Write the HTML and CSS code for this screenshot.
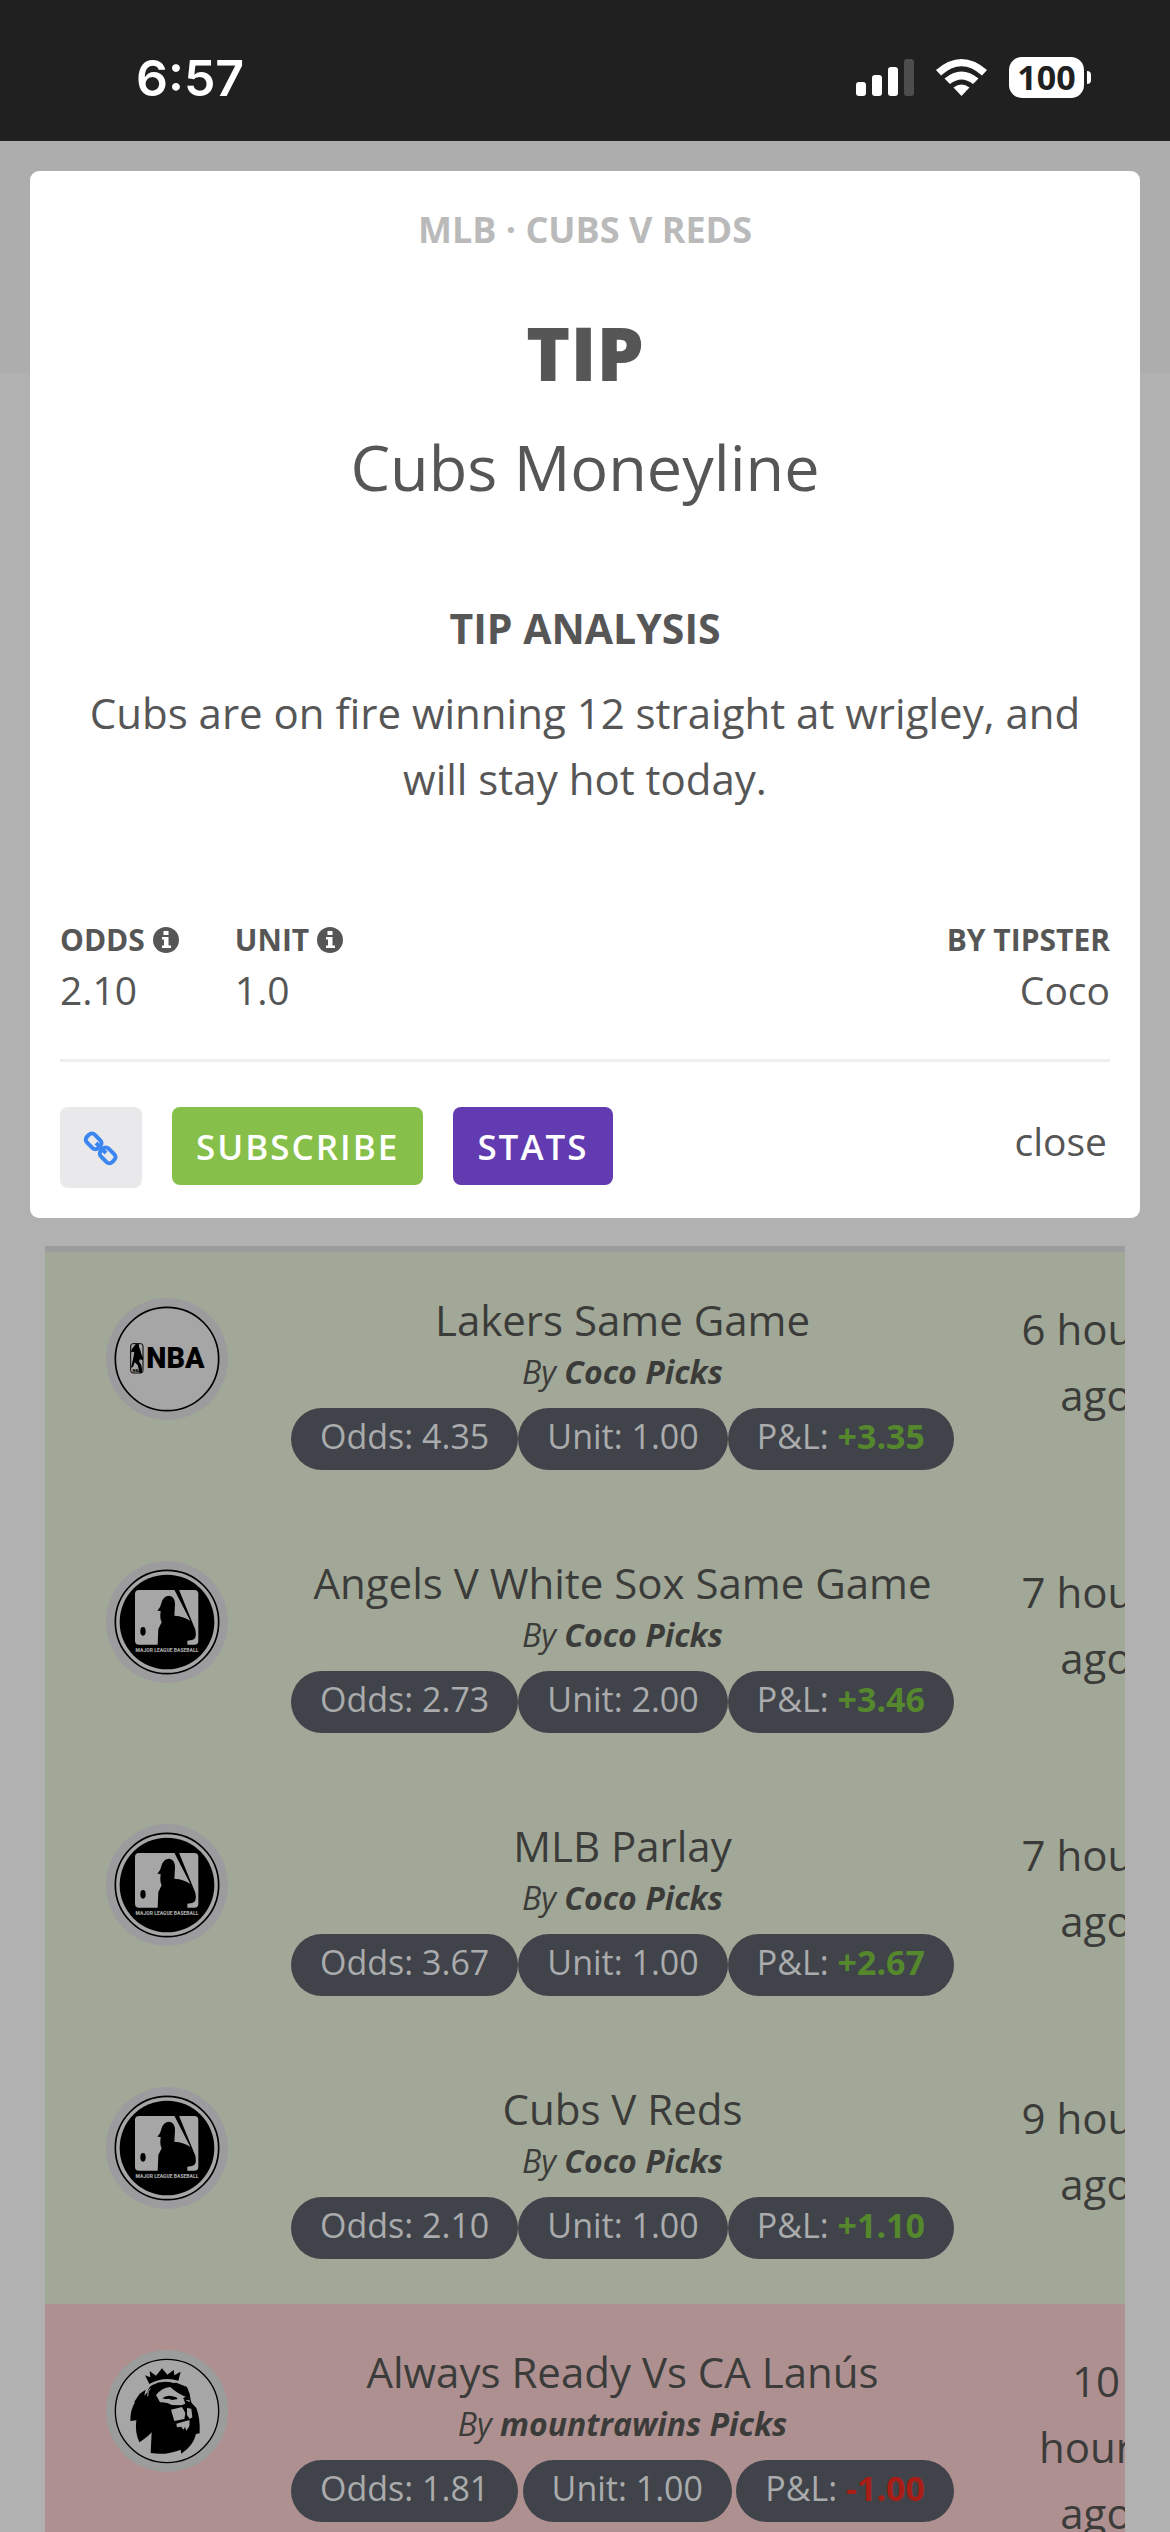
FILE: index.html
```html
<!DOCTYPE html>
<html lang="en">

<head>
    <meta charset="UTF-8">
    <meta name="viewport" content="width=device-width, initial-scale=1.0">
    <title>Tip</title>
    <link rel="stylesheet" href="styles.css">
</head>

<body>
    <!-- shared drawings -->
    <svg class="defs" width="0" height="0" aria-hidden="true">
        <symbol id="info" viewBox="0 0 26 26">
            <circle cx="13" cy="13" r="13" fill="#565656" />
            <path d="M10.500 4h5v4h-5zM9 10h6.500v8.500H18V21H9v-2.500h2v-6H9z" fill="#fff" />
        </symbol>
        <symbol id="mlb" viewBox="47 61 366 366">
            <circle cx="230" cy="244" r="183" fill="#9c9c9e" />
            <circle cx="230" cy="244" r="155" fill="#a6a6a6" stroke="#000" stroke-width="5" />
            <circle cx="230" cy="244" r="142" />
            <rect x="134" y="148" width="190" height="164" rx="12" fill="#a6a6a6" />
            <path d="M252 147h14l49 120q6 28-10 31l-14 2v13h-89l2-48 10-20q-6-10-3-34l-10-1q10-9 13-25 6-20 22-20 18 2 18 26l-2 34q30 2 48 16z" />
            <ellipse cx="158" cy="272" rx="8" ry="13" />
            <text class="logo-text" x="230" y="334" font-size="15" text-anchor="middle" fill="#a6a6a6">MAJOR LEAGUE BASEBALL</text>
        </symbol>
    </svg>

    <div class="status">
        <span class="time">6:57</span>
        <div class="status-icons">
            <svg width="58" height="37" viewBox="0 0 58 37" fill="#fff">
                <rect y="23" width="10" height="14" rx="3" />
                <rect x="16" y="16" width="10" height="21" rx="3" />
                <rect x="32" y="8" width="10" height="29" rx="3" />
                <rect x="48" width="10" height="37" rx="3" fill="#4d4d4d" />
            </svg>
            <svg width="51" height="37" viewBox="0 0 51 37" fill="#fff">
                <path d="M0 11Q25.500-11 51 11l-5 5.500Q25.500-2 5 16.500z" />
                <path d="M8.500 19.500q17-14 34 0l-5.500 5.500q-11.500-9-23 0z" />
                <path d="M17.500 28.500q8-6 16 0l-8 8.500z" />
            </svg>
            <div class="battery">100</div>
        </div>
    </div>

    <div class="page">
        <div class="modal" role="dialog" aria-labelledby="tip-title">
            <div class="modal-head">MLB · CUBS V REDS</div>
            <h1 id="tip-title">TIP</h1>
            <div class="pick">Cubs Moneyline</div>
            <h2>TIP ANALYSIS</h2>
            <p class="analysis">Cubs are on fire winning 12 straight at wrigley, and will stay hot today.</p>
            <div class="info">
                <div class="info-item">
                    <div class="label">ODDS <svg class="info-icon"><use href="#info" /></svg></div>
                    <div class="value">2.10</div>
                </div>
                <div class="info-item">
                    <div class="label">UNIT <svg class="info-icon"><use href="#info" /></svg></div>
                    <div class="value">1.0</div>
                </div>
                <div class="info-item tipster">
                    <div class="label">BY TIPSTER</div>
                    <div class="value">Coco</div>
                </div>
            </div>
            <div class="actions">
                <button class="btn link" aria-label="Copy link">
                    <svg width="36" height="36" viewBox="0 0 36 36" fill="none" stroke="#3b86f0" stroke-width="4">
                        <rect x="3" y="6" width="16" height="11" rx="4" transform="rotate(45 11 11)" />
                        <rect x="17" y="20" width="16" height="11" rx="4" transform="rotate(45 25 25)" />
                        <path d="M13 13l10 10" />
                    </svg>
                </button>
                <button class="btn subscribe">SUBSCRIBE</button>
                <button class="btn stats">STATS</button>
                <button class="close">close</button>
            </div>
        </div>

        <div class="list">
            <table class="tips">
                <tr class="win">
                    <td class="logo">
                        <svg viewBox="47 53 366 366">
                            <circle cx="230" cy="236" r="183" fill="#9c9c9e" />
                            <circle cx="230" cy="236" r="155" fill="#a6a6a6" stroke="#000" stroke-width="5" />
                            <rect x="121" y="190" width="37" height="88" rx="7" fill="none" stroke="#000" stroke-width="3" />
                            <path d="M137 190h8l2 12q4 6 5 16l3 8 4 6-2 8-8-3-3 6q8 10 9 22v13h-7l-6-24-9-8-5 14-6 2 8-34 2-14-10 2q0-10 9-18z" />
                            <text class="logo-text" x="139" y="274" font-size="12" text-anchor="middle">NBA</text>
                            <text class="logo-text" x="168" y="264" font-size="86">NBA</text>
                        </svg>
                    </td>
                    <td class="tip">
                        <div class="tip-name">Lakers Same Game</div>
                        <div class="by">By <b>Coco Picks</b></div>
                        <div class="pills">
                            <span class="pill">Odds: 4.35</span>
                            <span class="pill">Unit: 1.00</span>
                            <span class="pill">P&amp;L: <b>+3.35</b></span>
                        </div>
                    </td>
                    <td class="ago">6 hours ago</td>
                </tr>
                <tr class="win">
                    <td class="logo"><svg><use href="#mlb" /></svg></td>
                    <td class="tip">
                        <div class="tip-name">Angels V White Sox Same Game</div>
                        <div class="by">By <b>Coco Picks</b></div>
                        <div class="pills">
                            <span class="pill">Odds: 2.73</span>
                            <span class="pill">Unit: 2.00</span>
                            <span class="pill">P&amp;L: <b>+3.46</b></span>
                        </div>
                    </td>
                    <td class="ago">7 hours ago</td>
                </tr>
                <tr class="win">
                    <td class="logo"><svg><use href="#mlb" /></svg></td>
                    <td class="tip">
                        <div class="tip-name">MLB Parlay</div>
                        <div class="by">By <b>Coco Picks</b></div>
                        <div class="pills">
                            <span class="pill">Odds: 3.67</span>
                            <span class="pill">Unit: 1.00</span>
                            <span class="pill">P&amp;L: <b>+2.67</b></span>
                        </div>
                    </td>
                    <td class="ago">7 hours ago</td>
                </tr>
                <tr class="win">
                    <td class="logo"><svg><use href="#mlb" /></svg></td>
                    <td class="tip">
                        <div class="tip-name">Cubs V Reds</div>
                        <div class="by">By <b>Coco Picks</b></div>
                        <div class="pills">
                            <span class="pill">Odds: 2.10</span>
                            <span class="pill">Unit: 1.00</span>
                            <span class="pill">P&amp;L: <b>+1.10</b></span>
                        </div>
                    </td>
                    <td class="ago">9 hours ago</td>
                </tr>
                <tr class="loss">
                    <td class="logo">
                        <svg viewBox="47 61 366 366">
                            <circle cx="230" cy="244" r="183" fill="#9b9c9c" />
                            <circle cx="230" cy="244" r="155" fill="#a6a6a6" stroke="#000" stroke-width="4" />
                            <!-- crown -->
                            <path d="M177 163l-13-26 16 6-2-19 19 14 18-22 16 19 19-14 2 16 19-11-7 27q-44-13-87 10z" />
                            <!-- head and mane -->
                            <path d="M186 166q30-16 64-6l8-1 32 13 8 20 3 20 3 8 14 15q12 30 10 76l-11 2q-8 35-44 59l-2-12q-44 18-90 10l3-62q-12 14-37 30-14-30-9-66l-18 2q0-34 14-56h-3l17-26 18-12-4 18 10-10q0-14 14-22z" />
                            <g fill="#a6a6a6">
                                <path d="M197 196q18-22 43-24 22 22 58 34v12l-18-10 5 14-12 5-28-1q-16-10-36-8z" />
                                <path d="M242 240l33-8 10 18-3 18-30 6zM290 235l13 2 3 26-8 5-8-12zM258 282l31-9 9-1-1 18-9 13-4-12-4 9-8-9-12 2z" />
                                <path d="M171 205q1-24 14-30l24 2q-14 4-17 18l-8 12q-4-7-13-2z" fill="#000" />
                                <path d="M172 200q0-18 8-24" fill="none" stroke="#a6a6a6" stroke-width="3" />
                            </g>
                            <path d="M216 206q14-14 42-3l4 5-16 3-12-4q-8 3-18-1zM278 206l12-7 10 8-2 5-14-1z" />
                        </svg>
                    </td>
                    <td class="tip">
                        <div class="tip-name">Always Ready Vs CA Lanús</div>
                        <div class="by">By <b>mountrawins Picks</b></div>
                        <div class="pills">
                            <span class="pill">Odds: 1.81</span>
                            <span class="pill">Unit: 1.00</span>
                            <span class="pill">P&amp;L: <b>-1.00</b></span>
                        </div>
                    </td>
                    <td class="ago">10 hours ago</td>
                </tr>
            </table>
        </div>
    </div>
</body>

</html>
```
FILE: styles.css
```css
* {
    margin: 0;
    padding: 0;
    box-sizing: border-box;
}

body {
    height: 100vh;
    overflow: hidden;
    background: #b1b1b1;
    color: #565656;
    font-family: "Open Sans", sans-serif;
    font-size: 42px;
    line-height: 66px;
}

.defs {
    position: absolute;
}

/* status bar */
.status {
    display: flex;
    justify-content: space-between;
    align-items: center;
    height: 141px;
    padding: 14px 86px 0 136px;
    background: #202020;
    color: #fff;
    font-family: Inter, sans-serif;
}

.time {
    font-size: 50px;
    font-weight: 600;
}

.status-icons {
    display: flex;
    align-items: center;
    gap: 22px;
}

.battery {
    position: relative;
    width: 75px;
    height: 41px;
    border-radius: 13px;
    background: #fff;
    color: #202020;
    font-family: "Open Sans", sans-serif;
    font-size: 34px;
    font-weight: 700;
    line-height: 41px;
    text-align: center;
}

.battery::after {
    content: "";
    position: absolute;
    top: 14px;
    right: -7px;
    width: 4px;
    height: 13px;
    border-radius: 0 4px 4px 0;
    background: #fff;
}

.page {
    padding: 30px 30px 0;
    background: linear-gradient(#adadad 232px, #b1b1b1 232px);
}

/* modal */
.modal {
    padding: 34px 30px 30px;
    border-radius: 9px;
    background: #fff;
    text-align: center;
}

.modal-head {
    color: #bababa;
    font-size: 36px;
    font-weight: 700;
    line-height: 50px;
}

h1 {
    margin-top: 46px;
    font-size: 75px;
    font-weight: 800;
    line-height: 102px;
}

.pick {
    margin-top: 21px;
    font-size: 63px;
    line-height: 86px;
}

h2 {
    margin-top: 90px;
    font-size: 41px;
    font-weight: 700;
    line-height: 57px;
}

.analysis {
    margin-top: 23px;
}

.info {
    display: flex;
    gap: 56px;
    margin-top: 107px;
    padding-bottom: 43px;
    border-bottom: 3px solid #eee;
    text-align: left;
}

.tipster {
    margin-left: auto;
    text-align: right;
}

.label {
    display: flex;
    align-items: center;
    gap: 8px;
    font-size: 30px;
    font-weight: 700;
    line-height: 41px;
}

.info-icon {
    width: 26px;
    height: 26px;
}

.value {
    margin-top: 3px;
    font-size: 39px;
    line-height: 53px;
}

.actions {
    display: flex;
    align-items: flex-start;
    gap: 30px;
    margin-top: 45px;
}

button {
    border: none;
    background: none;
    color: inherit;
    font-family: inherit;
}

.btn {
    height: 78px;
    padding: 0 24px;
    border-radius: 8px;
    color: #fff;
    font-size: 35px;
    font-weight: 600;
    letter-spacing: 2px;
}

.link {
    display: flex;
    align-items: center;
    height: 81px;
    padding: 0 23px;
    background: #e9e9eb;
}

.subscribe {
    background: #86bf49;
}

.stats {
    background: #613baf;
}

.close {
    margin-left: auto;
    padding-right: 3px;
    font-size: 39px;
    line-height: 68px;
}

/* tips list */
.list {
    margin: 28px 15px 0;
    overflow: hidden;
    border-top: 6px solid #9b9c9e;
}

.tips {
    border-collapse: collapse;
    table-layout: fixed;
    width: 1131px;
    color: #3b3c3a;
    text-align: center;
}

td {
    vertical-align: top;
}

.win {
    background: #a2a898;
}

.loss {
    background: #ae9090;
}

.logo {
    width: 246px;
    padding: 46px 0 0 61px;
}

.logo svg {
    display: block;
    width: 122px;
    height: 122px;
}

.logo-text {
    font-family: Roboto, "Liberation Sans", sans-serif;
    font-weight: 900;
}

.tip {
    padding: 38px 0 45px;
}

.tip-name {
    line-height: 60px;
}

.by {
    font-size: 32px;
    font-style: italic;
    line-height: 44px;
}

.pills {
    display: flex;
    justify-content: space-between;
    margin-top: 14px;
}

.pill {
    padding: 0 29px 6px;
    border-radius: 31px;
    background: #404349;
    color: #aaabad;
    font-size: 34px;
    line-height: 56px;
}

.win .pill b {
    color: #55872d;
}

.loss .pill b {
    color: #a81d15;
}

.ago {
    width: 222px;
    padding: 44px 0 0 62px;
}
```
